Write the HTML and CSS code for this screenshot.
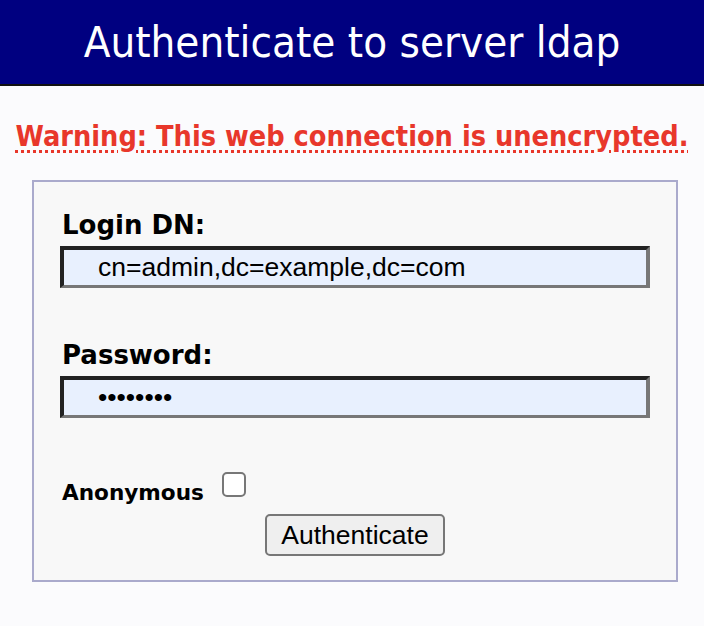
FILE: index.html
```html
<!DOCTYPE html>
<html>
<head>
<meta charset="utf-8">
<link rel="stylesheet" href="styles.css">
</head>
<body>
<div class="head">Authenticate to server ldap</div>
<div class="warn"><span class="warn-text">Warning: This web connection is unencrypted.</span></div>
<form class="box">
  <div class="label">Login DN:</div>
  <div class="field">cn=admin,dc=example,dc=com</div>
  <div class="label label-pw">Password:</div>
  <div class="field field-pw">&bull;&bull;&bull;&bull;&bull;&bull;&bull;&bull;</div>
  <div class="anon">
    <span class="anon-label">Anonymous</span>
    <span class="check"></span>
  </div>
  <div class="actions">
    <span class="btn">Authenticate</span>
  </div>
</form>
</body>
</html>
```
FILE: styles.css
```css
html, body {
  margin: 0;
  padding: 0;
  background: #fbfbfd;
}
body {
  width: 704px;
  height: 626px;
  overflow: hidden;
}
.head {
  height: 84px;
  background: #000080;
  border-bottom: 2px solid #111;
  color: #fff;
  font-family: "DejaVu Sans Condensed", "DejaVu Sans", sans-serif;
  font-stretch: condensed;
  font-size: 43.5px;
  line-height: 84px;
  text-align: center;
}
.warn {
  margin-top: 32px;
  text-align: center;
  font-family: "DejaVu Sans Condensed", "DejaVu Sans", sans-serif;
  font-stretch: condensed;
  font-weight: bold;
  font-size: 28.6px;
  line-height: 36px;
  color: #e8372b;
}
.warn-text {
  text-decoration: underline dotted #e8372b;
  text-decoration-thickness: 3px;
  text-underline-offset: 4px;
}
.box {
  margin: 26px 0 0 32px;
  width: 646px;
  height: 402px;
  box-sizing: border-box;
  border: 2px solid #aaaacc;
  background: #f8f8f8;
  padding: 28px 26px 0 26px;
}
.label {
  font-family: "DejaVu Sans", sans-serif;
  font-weight: bold;
  font-size: 26px;
  line-height: 30px;
  color: #000;
  margin-left: 2px;
}
.label-pw {
  margin-top: 52px;
}
.field {
  margin-top: 6px;
  width: 590px;
  height: 42px;
  box-sizing: border-box;
  border-style: solid;
  border-width: 4px 4px 3px 4px;
  border-color: #222 #777 #777 #222;
  background: #e8f0fe;
  font-family: "Liberation Sans", Arial, sans-serif;
  font-size: 26.5px;
  line-height: 34px;
  padding-left: 34px;
  color: #000;
}
.anon {
  margin-top: 54px;
  display: flex;
  align-items: flex-end;
  margin-left: 2px;
}
.anon-label {
  font-family: "DejaVu Sans", sans-serif;
  font-weight: bold;
  font-size: 21.6px;
  line-height: 24px;
}
.check {
  margin-left: 18px;
  margin-bottom: 8px;
  width: 24px;
  height: 25px;
  box-sizing: border-box;
  border: 2px solid #777;
  border-radius: 5px;
  background: #fff;
}
.actions {
  margin-top: 9px;
  display: flex;
  justify-content: center;
}
.btn {
  display: inline-block;
  box-sizing: border-box;
  width: 180px;
  height: 42px;
  border: 2px solid #777;
  border-radius: 5px;
  background: #efefef;
  font-family: "Liberation Sans", Arial, sans-serif;
  font-size: 26.5px;
  line-height: 38px;
  text-align: center;
  color: #000;
}
```
